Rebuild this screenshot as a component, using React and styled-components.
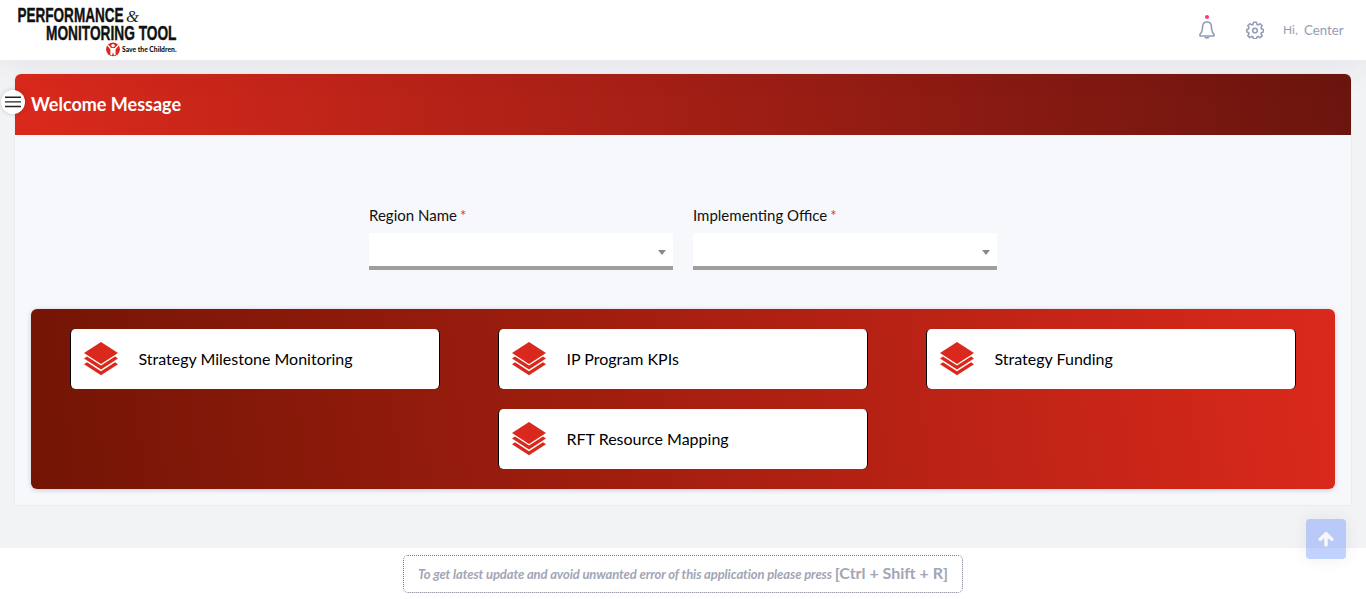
import React from "react";
import styled, { createGlobalStyle } from "styled-components";

const GlobalStyle = createGlobalStyle`
  * { box-sizing: border-box; }
  body {
    margin: 0;
    background: #fff;
    color: #000;
    font-family: Lato, "Liberation Sans", sans-serif;
    overflow: hidden;
  }
`;

const Page = styled.div`
  height: 599px;
  display: flex;
  flex-direction: column;
`;

const Header = styled.header`
  position: relative;
  z-index: 1;
  height: 60px;
  flex: none;
  display: flex;
  align-items: center;
  justify-content: space-between;
  padding: 0 22px 0 16px;
  background: #fff;
  box-shadow: 0 0 40px rgba(82, 63, 105, 0.1);
`;

const LogoSvg = styled.svg`
  display: block;
  width: 164px;
  height: 60px;
`;

const Toolbar = styled.div`
  display: flex;
  align-items: center;
  height: 60px;
  padding-bottom: 1px;
  color: #959cb6;
`;

const BellButton = styled.div`
  position: relative;
  width: 18px;
  height: 20px;
  margin-right: 30px;
  svg { display: block; }
`;

const BellDot = styled.span`
  position: absolute;
  left: 7px;
  top: -5px;
  width: 4px;
  height: 4px;
  border-radius: 50%;
  background: #fd397a;
`;

const GearButton = styled.div`
  width: 18px;
  height: 18px;
  margin-right: 19px;
  svg { display: block; }
`;

const Greeting = styled.span`
  width: 15px;
  font-size: 12px;
  line-height: 20px;
  margin-right: 6px;
`;

const UserName = styled.span`
  width: 40px;
  font-size: 13.3px;
  line-height: 20px;
`;

const Main = styled.main`
  height: 488px;
  flex: none;
  padding: 14px 15px 0;
  background: #f2f3f5;
`;

const Card = styled.section`
  position: relative;
  height: 431px;
  border-radius: 6px 6px 0 0;
  background: #f7f8fc;
  box-shadow: 0 0 2px rgba(69, 65, 78, 0.14);
`;

const CardHeader = styled.div`
  height: 61px;
  display: flex;
  align-items: center;
  padding: 0 16px 2px;
  border-radius: 6px 6px 0 0;
  background: linear-gradient(80deg, #da291c, #6b150e);
`;

const Title = styled.h1`
  margin: 0;
  color: #fff;
  font-size: 18px;
  font-weight: 700;
  line-height: 24px;
`;

const MenuToggle = styled.button`
  position: absolute;
  z-index: 2;
  left: -14px;
  top: 16px;
  width: 24px;
  height: 24px;
  padding: 0;
  border: 0;
  border-radius: 50%;
  display: flex;
  align-items: center;
  justify-content: center;
  background: #fff;
  box-shadow: 0 0 5px rgba(0, 0, 0, 0.18);
`;

const Filters = styled.div`
  display: flex;
  justify-content: center;
  gap: 20px;
  padding-top: 70px;
`;

const Field = styled.div`
  width: 304px;
`;

const Label = styled.label`
  display: block;
  font-size: 15px;
  line-height: 20px;
  height: 28px;
  color: #111;
`;

const Required = styled.span`
  color: #f8283c;
  margin-left: 3px;
`;

const Select = styled.div`
  height: 37px;
  display: flex;
  align-items: center;
  justify-content: flex-end;
  padding: 6px 7px 0 0;
  background: #fff;
  border-bottom: 4px solid #9e9e9e;
`;

const Caret = styled.span`
  border: 4px solid transparent;
  border-top: 5px solid #888;
  border-bottom: 0;
`;

const Modules = styled.div`
  height: 180px;
  margin: 39px 16px 0;
  padding: 20px 39px 0;
  display: flex;
  flex-wrap: wrap;
  justify-content: center;
  align-content: flex-start;
  gap: 20px 58px;
  border-radius: 6px;
  background: linear-gradient(83deg, #731505, #da291c);
  box-shadow: 0 1px 5px rgba(69, 65, 78, 0.25);
`;

const ModuleTile = styled.div`
  width: 370px;
  height: 60px;
  display: flex;
  align-items: center;
  gap: 20px;
  padding: 0 0 2px 11.5px;
  border: solid #000;
  border-width: 0 1px;
  border-radius: 5px;
  background: #fff;
  font-size: 16px;
  svg { display: block; }
`;

const Footer = styled.footer`
  flex: 1;
  display: flex;
  justify-content: center;
  padding-top: 7px;
  background: #fff;
`;

const Notice = styled.div`
  width: 560px;
  height: 38px;
  display: flex;
  align-items: baseline;
  justify-content: center;
  padding-top: 7px;
  border: 1px dotted #74788d;
  border-radius: 5px;
  color: #a2a5b5;
  font-weight: 700;
  line-height: 20px;
  white-space: pre;
`;

const NoticeText = styled.em`
  font-size: 13px;
  letter-spacing: -0.1px;
`;

const Shortcut = styled.span`
  font-size: 16px;
`;

const ScrollTop = styled.button`
  position: fixed;
  right: 20px;
  bottom: 40px;
  width: 40px;
  height: 40px;
  padding: 0;
  border: 0;
  border-radius: 4px;
  display: flex;
  align-items: center;
  justify-content: center;
  background: #5d89ff;
  box-shadow: 0 0 15px 1px rgba(69, 65, 78, 0.2);
  opacity: 0.38;
`;

const Logo = () => (
  <LogoSvg viewBox="0 0 164 60" aria-label="Performance & Monitoring Tool">
    <g fill="#111" stroke="#111" strokeWidth="0.4" fontFamily="'Liberation Sans Narrow', 'Liberation Sans', sans-serif" fontWeight="700" fontSize="20">
      <text x="1.5" y="22" textLength="106" lengthAdjust="spacingAndGlyphs">PERFORMANCE</text>
      <text x="30" y="39.7" textLength="130.5" lengthAdjust="spacingAndGlyphs">MONITORING TOOL</text>
    </g>
    <text x="110" y="22" fill="#222" fontFamily="'Liberation Serif', serif" fontStyle="italic" fontSize="17" textLength="13" lengthAdjust="spacingAndGlyphs">&amp;</text>
    <circle cx="97" cy="49.3" r="6.9" fill="#da291c" />
    <circle cx="97" cy="45.6" r="1.7" fill="#fff" />
    <path d="M92 44.6l3.2 3.5h3.6l3.2-3.5.8.8-3.2 4.2v5.2l-1.5.6-1.1-2.8-1.1 2.8-1.5-.6v-5.2l-3.2-4.2z" fill="#fff" />
    <text x="106" y="52" fill="#111" fontFamily="Lato, sans-serif" fontWeight="900" fontSize="6.8" textLength="54.5" lengthAdjust="spacingAndGlyphs">Save the Children.</text>
  </LogoSvg>
);

const Bell = () => (
  <svg width="18" height="20" viewBox="0 0 18 20" fill="none" stroke="currentColor" strokeWidth="1.6" strokeLinejoin="round" strokeLinecap="round">
    <path d="M9 2C6.2 2 4.7 4 4.6 6.5C4.5 10 4.3 12.2 2 14.2V16H16V14.2C13.7 12.2 13.5 10 13.4 6.5C13.3 4 11.8 2 9 2Z" />
    <path d="M7.3 17.3Q9 18.5 10.7 17.3" />
  </svg>
);

const Gear = () => (
  <svg width="18" height="18" viewBox="0 0 18 18" fill="none" stroke="currentColor" strokeWidth="1.6" strokeLinejoin="round">
    <path d="M7.6 1.2h2.8l.6 2.2 1.2.5 2-1.2 2 2-1.2 2 .5 1.2 1.9.5v2.5l-1.9.5-.5 1.2 1.2 2-2 2-2-1.2-1.2.5-.6 1.9H7.6L7 15.9l-1.2-.5-2 1.2-2-2 1.2-2-.5-1.2-1.7-.5V8.4l1.7-.5.5-1.2-1.2-2 2-2 2 1.2L7 3.4z" />
    <circle cx="9" cy="9.5" r="2.3" />
  </svg>
);

const Layers = () => (
  <svg width="36" height="36" viewBox="0 0 36 36" fill="#da291c">
    <path d="M18 2L35 13 18 24 1 13z" />
    <path d="M1 18.4l3-1.9 14 9 14-9 3 1.9-17 11z" />
    <path d="M1 24.2l3-1.9 14 9 14-9 3 1.9-17 11z" />
  </svg>
);

const fields = ["Region Name", "Implementing Office"];
const modules = [
  "Strategy Milestone Monitoring",
  "IP Program KPIs",
  "Strategy Funding",
  "RFT Resource Mapping",
];

export default function App() {
  return (
    <Page>
      <GlobalStyle />
      <Header>
        <Logo />
        <Toolbar>
          <BellButton><Bell /><BellDot /></BellButton>
          <GearButton><Gear /></GearButton>
          <Greeting>Hi,</Greeting>
          <UserName>Center</UserName>
        </Toolbar>
      </Header>
      <Main>
        <Card>
          <MenuToggle aria-label="Toggle menu">
            <svg width="16" height="12" viewBox="0 0 16 12" fill="#222">
              <path d="M0 .5h16v1.4H0zM0 5.2h16v1.4H0zM0 9.8h16v1.4H0z" />
            </svg>
          </MenuToggle>
          <CardHeader><Title>Welcome Message</Title></CardHeader>
          <Filters>
            {fields.map((name) => (
              <Field key={name}>
                <Label>{name}<Required>*</Required></Label>
                <Select><Caret /></Select>
              </Field>
            ))}
          </Filters>
          <Modules>
            {modules.map((name) => (
              <ModuleTile key={name}><Layers />{name}</ModuleTile>
            ))}
          </Modules>
        </Card>
      </Main>
      <Footer>
        <Notice>
          <NoticeText>To get latest update and avoid unwanted error of this application please press </NoticeText>
          <Shortcut>[Ctrl + Shift + R]</Shortcut>
        </Notice>
      </Footer>
      <ScrollTop aria-label="Scroll to top">
        <svg width="16" height="16" viewBox="0 0 16 16" fill="none" stroke="#fff" strokeWidth="3.6" strokeLinecap="round" strokeLinejoin="round">
          <path d="M8 14V3M2.3 8.2L8 2.7l5.7 5.5" />
        </svg>
      </ScrollTop>
    </Page>
  );
}
